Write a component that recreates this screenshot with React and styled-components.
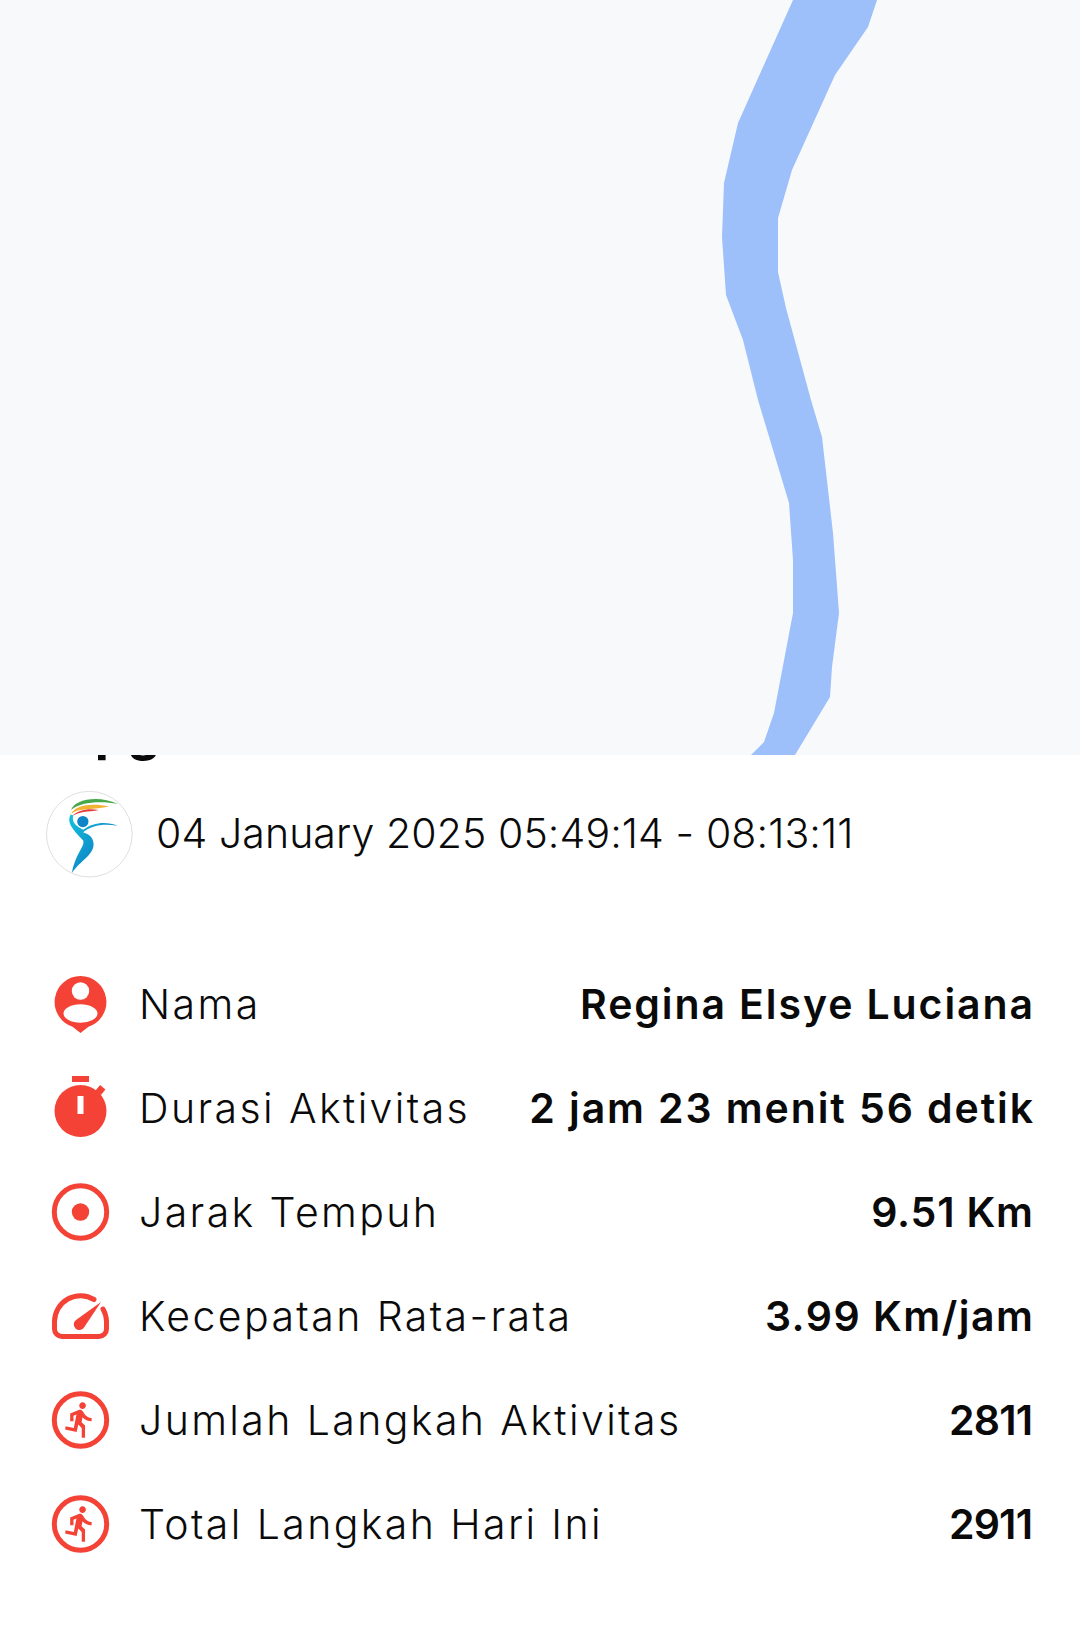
import React from 'react'
import styled, { createGlobalStyle } from 'styled-components'

const GlobalStyle = createGlobalStyle`
  html, body {
    margin: 0;
    padding: 0;
    background: #fff;
  }
  body {
    font-family: Inter, "Noto Sans", "Liberation Sans", sans-serif;
    color: #0a0a0a;
  }
`

const stats = [
  { icon: 'person', label: 'Nama', value: 'Regina Elsye Luciana', tracking: 1.9 },
  { icon: 'timer', label: 'Durasi Aktivitas', value: '2 jam 23 menit 56 detik', tracking: 1.9 },
  { icon: 'target', label: 'Jarak Tempuh', value: '9.51 Km', tracking: 0.8 },
  { icon: 'speed', label: 'Kecepatan Rata-rata', value: '3.99 Km/jam', tracking: 1.5 },
  { icon: 'run', label: 'Jumlah Langkah Aktivitas', value: '2811', tracking: -0.8 },
  { icon: 'run', label: 'Total Langkah Hari Ini', value: '2911', tracking: -0.8 },
]

const RED = '#f44336'
const RUNNER = 'M13.49 5.48c1.1 0 2-.9 2-2s-.9-2-2-2-2 .9-2 2 .9 2 2 2zm-3.6 13.9l1-4.4 2.1 2v6h2v-7.5l-2.1-2 .6-3c1.3 1.5 3.3 2.5 5.5 2.5v-2c-1.9 0-3.5-1-4.3-2.4l-1-1.6c-.4-.6-1-1-1.7-1-.3 0-.5.1-.8.1l-5.2 2.2v4.7h2v-3.4l1.8-.7-1.6 8.1-4.9-1-.4 2 7 1.4z'

function StatIcon({ name }) {
  return (
    <IconSvg viewBox="0 -3 60 66">
      {name === 'person' && (
        <>
          <path fill={RED} d="M29.5 2a26 26 0 0 1 8 50.7L29.5 59l-8-6.3A26 26 0 0 1 29.5 2z" />
          <circle cx="29.5" cy="17" r="8.7" fill="#fff" />
          <ellipse cx="29.5" cy="39.5" rx="17" ry="9.3" fill="#fff" />
        </>
      )}
      {name === 'timer' && (
        <>
          <rect x="21" y="-2" width="17" height="6" fill={RED} />
          <rect x="46" y="8.5" width="7" height="7" fill={RED} transform="rotate(40 49.5 12)" />
          <circle cx="29.5" cy="33" r="26" fill={RED} />
          <rect x="26.5" y="18" width="6" height="18" fill="#fff" />
        </>
      )}
      {(name === 'target' || name === 'run') && (
        <circle cx="29.5" cy="30" r="26.2" fill="none" stroke={RED} strokeWidth="5" />
      )}
      {name === 'target' && <circle cx="29.5" cy="30" r="8.7" fill={RED} />}
      {name === 'run' && (
        <path fill={RED} d={RUNNER} transform="translate(9.3 9.9) scale(1.65)" />
      )}
      {name === 'speed' && (
        <>
          <path
            fill="none"
            stroke={RED}
            strokeWidth="5"
            strokeLinecap="round"
            d="M43 13.5A26 26 0 0 0 3.5 35.5V43a7.5 7.5 0 0 0 7.5 7.5h37a7.5 7.5 0 0 0 7.5-7.5V35.5A26 26 0 0 0 52 23"
          />
          <path fill={RED} d="M50 16L33 41.5a5.6 5.6 0 1 1-8-7.6z" />
        </>
      )}
    </IconSvg>
  )
}

function Logo() {
  return (
    <LogoSvg viewBox="138 212 262 260">
      <defs>
        <linearGradient id="bodyFill" x1="0" y1="0" x2="1" y2="1">
          <stop offset="0" stopColor="#12c4dc" />
          <stop offset="0.5" stopColor="#0f94cc" />
          <stop offset="1" stopColor="#0c6fb8" />
        </linearGradient>
      </defs>
      <circle cx="268.5" cy="341" r="129" fill="#fff" stroke="#d8d8d8" strokeWidth="2.5" />
      <path fill="#46a84a" d="M214 268C220 240 290 220 355 250C300 240 240 245 214 268z" />
      <path fill="#f2b233" d="M214 280C225 255 275 246 328 258C285 268 235 262 214 280z" />
      <path fill="#e23d3a" d="M215 288C235 268 265 262 297 268C265 274 235 272 215 288z" />
      <circle cx="249" cy="303" r="17" fill="#0f85c8" />
      <path
        fill="url(#bodyFill)"
        d="M212 282C200 305 215 325 250 360C256 378 226 400 216 458C240 420 290 400 280 362C276 345 262 340 250 335C275 315 310 308 354 316C320 302 280 305 250 328C232 318 214 308 220 285z"
      />
    </LogoSvg>
  )
}

export default function App() {
  return (
    <Page>
      <GlobalStyle />
      <MapArea>
        <RouteSvg viewBox="0 0 1080 755">
          <polygon
            fill="#9dbffa"
            points="793,0 738,123 724,183 722,237 726,295 743,340 758,400 789,503 793,560 793,613 774,713 764,742 751,755 795,755 830,697 832,667 839,613 833,533 822,437 811,400 786,308 778,272 778,218 792,170 835,75 868,27 877,0"
          />
        </RouteSvg>
      </MapArea>
      <Details>
        <Title>Apg</Title>
        <DateRow>
          <Logo />
          <DateText>04 January 2025 05:49:14 - 08:13:11</DateText>
        </DateRow>
        <StatList>
          {stats.map((s) => (
            <StatRow key={s.label}>
              <StatIcon name={s.icon} />
              <StatLabel>{s.label}</StatLabel>
              <StatValue $tracking={s.tracking}>{s.value}</StatValue>
            </StatRow>
          ))}
        </StatList>
      </Details>
    </Page>
  )
}

const Page = styled.div`
  width: 1080px;
  height: 1640px;
  overflow: hidden;
  background: #fff;
`

const MapArea = styled.div`
  position: relative;
  z-index: 1;
  height: 755px;
  background: #f8f9fb;
`

const RouteSvg = styled.svg`
  display: block;
  width: 1080px;
  height: 755px;
`

const Details = styled.div`
  padding: 0 47px 0 46px;
`

const Title = styled.h1`
  margin: -47px 0 0 10px;
  height: 83px;
  font-size: 52px;
  line-height: 48px;
  font-weight: 700;
`

const DateRow = styled.div`
  display: flex;
  align-items: center;
  gap: 23px;
`

const LogoSvg = styled.svg`
  width: 87px;
  height: 87px;
  flex: none;
`

const DateText = styled.div`
  padding-bottom: 3px;
  font-size: 41px;
  font-weight: 300;
  letter-spacing: 0.1px;
  white-space: nowrap;
`

const StatList = styled.div`
  margin-top: 74px;
  display: flex;
  flex-direction: column;
`

const StatRow = styled.div`
  height: 104px;
  display: flex;
  align-items: center;
`

const IconSvg = styled.svg`
  width: 60px;
  height: 66px;
  margin-left: 5px;
  margin-right: 28px;
  flex: none;
  overflow: visible;
`

const StatLabel = styled.span`
  font-size: 41px;
  font-weight: 300;
  letter-spacing: 2.4px;
  white-space: nowrap;
`

const StatValue = styled.span`
  margin-left: auto;
  margin-right: ${(p) => -p.$tracking}px;
  font-size: 41px;
  font-weight: 600;
  letter-spacing: ${(p) => p.$tracking}px;
  white-space: nowrap;
`
